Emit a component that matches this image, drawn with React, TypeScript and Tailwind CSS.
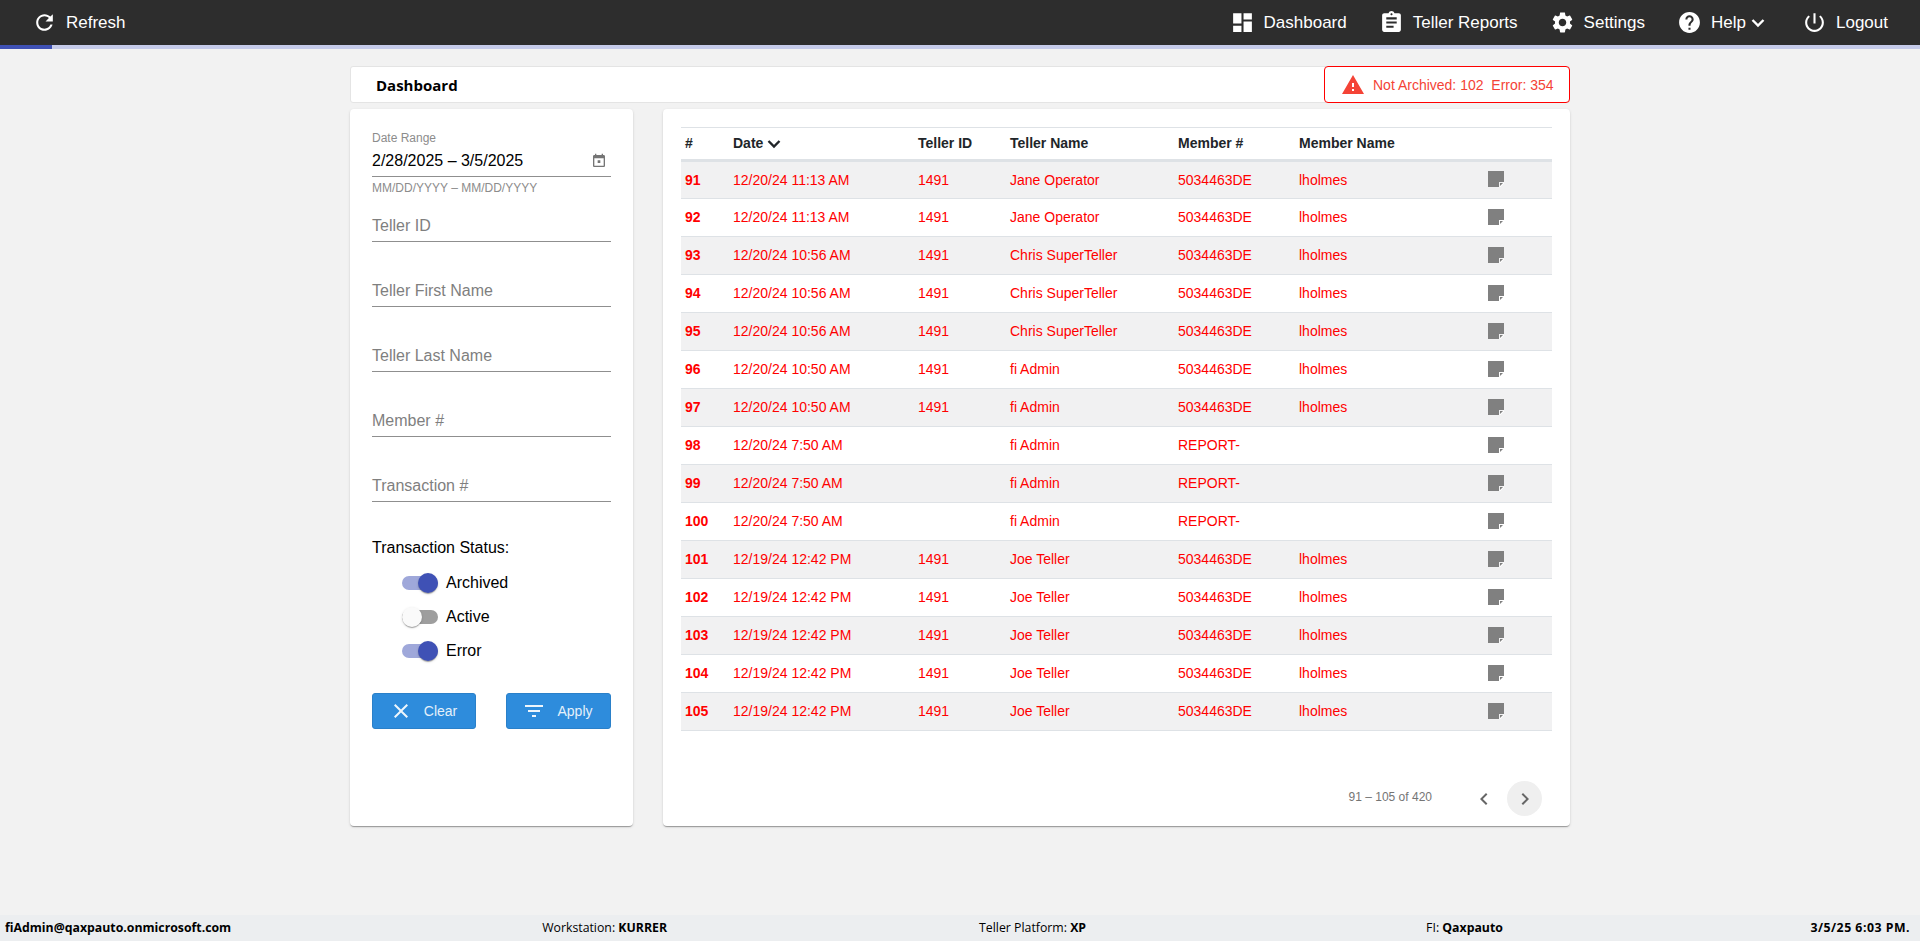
import React from "react";

type Row = { id: number; date: string; tellerId: string; teller: string; member: string; memberName: string };

const makeRow = (id: number, date: string, teller: string, tellerId = "1491", member = "5034463DE", memberName = "lholmes"): Row => ({
  id,
  date,
  tellerId,
  teller,
  member,
  memberName,
});

const ROWS: Row[] = [
  makeRow(91, "12/20/24 11:13 AM", "Jane Operator"),
  makeRow(92, "12/20/24 11:13 AM", "Jane Operator"),
  makeRow(93, "12/20/24 10:56 AM", "Chris SuperTeller"),
  makeRow(94, "12/20/24 10:56 AM", "Chris SuperTeller"),
  makeRow(95, "12/20/24 10:56 AM", "Chris SuperTeller"),
  makeRow(96, "12/20/24 10:50 AM", "fi Admin"),
  makeRow(97, "12/20/24 10:50 AM", "fi Admin"),
  makeRow(98, "12/20/24 7:50 AM", "fi Admin", "", "REPORT-", ""),
  makeRow(99, "12/20/24 7:50 AM", "fi Admin", "", "REPORT-", ""),
  makeRow(100, "12/20/24 7:50 AM", "fi Admin", "", "REPORT-", ""),
  makeRow(101, "12/19/24 12:42 PM", "Joe Teller"),
  makeRow(102, "12/19/24 12:42 PM", "Joe Teller"),
  makeRow(103, "12/19/24 12:42 PM", "Joe Teller"),
  makeRow(104, "12/19/24 12:42 PM", "Joe Teller"),
  makeRow(105, "12/19/24 12:42 PM", "Joe Teller"),
];

const PATHS = {
  refresh:
    "M17.65 6.35C16.2 4.9 14.21 4 12 4c-4.42 0-7.99 3.58-7.99 8s3.57 8 7.99 8c3.73 0 6.84-2.55 7.73-6h-2.08c-.82 2.33-3.04 4-5.65 4-3.31 0-6-2.69-6-6s2.69-6 6-6c1.66 0 3.14.69 4.22 1.78L13 11h7V4l-2.35 2.35z",
  dashboard: "M3 13h8V3H3v10zm0 8h8v-6H3v6zm10 0h8V11h-8v10zm0-18v6h8V3h-8z",
  assignment:
    "M19 3h-4.18C14.4 1.84 13.3 1 12 1c-1.3 0-2.4.84-2.82 2H5c-1.1 0-2 .9-2 2v14c0 1.1.9 2 2 2h14c1.1 0 2-.9 2-2V5c0-1.1-.9-2-2-2zm-7 0c.55 0 1 .45 1 1s-.45 1-1 1-1-.45-1-1 .45-1 1-1zm2 14H7v-2h7v2zm3-4H7v-2h10v2zm0-4H7V7h10v2z",
  settings:
    "M19.14 12.94c.04-.3.06-.61.06-.94 0-.32-.02-.64-.07-.94l2.03-1.58c.18-.14.23-.41.12-.61l-1.92-3.32c-.12-.22-.37-.29-.59-.22l-2.39.96c-.5-.38-1.03-.7-1.62-.94l-.36-2.54c-.04-.24-.24-.41-.48-.41h-3.84c-.24 0-.43.17-.47.41l-.36 2.54c-.59.24-1.13.57-1.62.94l-2.39-.96c-.22-.08-.47 0-.59.22L2.74 8.87c-.12.21-.08.47.12.61l2.03 1.58c-.05.3-.09.63-.09.94s.02.64.07.94l-2.03 1.58c-.18.14-.23.41-.12.61l1.92 3.32c.12.22.37.29.59.22l2.39-.96c.5.38 1.03.7 1.62.94l.36 2.54c.05.24.24.41.48.41h3.84c.24 0 .44-.17.47-.41l.36-2.54c.59-.24 1.13-.56 1.62-.94l2.39.96c.22.08.47 0 .59-.22l1.92-3.32c.12-.22.07-.47-.12-.61l-2.01-1.58zM12 15.6c-1.98 0-3.6-1.62-3.6-3.6s1.62-3.6 3.6-3.6 3.6 1.62 3.6 3.6-1.62 3.6-3.6 3.6z",
  help: "M12 2C6.48 2 2 6.48 2 12s4.48 10 10 10 10-4.48 10-10S17.52 2 12 2zm1 17h-2v-2h2v2zm2.07-7.75l-.9.92C13.45 12.9 13 13.5 13 15h-2v-.5c0-1.1.45-2.1 1.17-2.83l1.24-1.26c.37-.36.59-.86.59-1.41 0-1.1-.9-2-2-2s-2 .9-2 2H8c0-2.21 1.79-4 4-4s4 1.79 4 4c0 .88-.36 1.68-.93 2.25z",
  power:
    "M13 3h-2v10h2V3zm4.83 2.17l-1.42 1.42C17.99 7.86 19 9.81 19 12c0 3.87-3.13 7-7 7s-7-3.13-7-7c0-2.19 1.01-4.14 2.58-5.42L6.17 5.17C4.23 6.82 3 9.26 3 12c0 4.97 4.03 9 9 9s9-4.03 9-9c0-2.74-1.23-5.18-3.17-6.83z",
  warning: "M1 21h22L12 2 1 21zm12-3h-2v-2h2v2zm0-4h-2v-4h2v4z",
  today: "M19 3h-1V1h-2v2H8V1H6v2H5c-1.11 0-2 .9-2 2v14c0 1.1.89 2 2 2h14c1.1 0 2-.9 2-2V5c0-1.1-.9-2-2-2zm0 16H5V8h14v11zM10 11h4v4h-4z",
  close: "M19 6.41L17.59 5 12 10.59 6.41 5 5 6.41 10.59 12 5 17.59 6.41 19 12 13.41 17.59 19 19 17.59 13.41 12z",
  filter: "M10 18h4v-2h-4v2zM3 6v2h18V6H3zm3 7h12v-2H6v2z",
  prev: "M15.41 7.41L14 6l-6 6 6 6 1.41-1.41L10.83 12z",
  next: "M10 6L8.59 7.41 13.17 12l-4.58 4.59L10 18l6-6z",
};

const Icon = ({ d, className }: { d: string; className: string }) => (
  <svg viewBox="0 0 24 24" className={className} fill="currentColor">
    <path d={d} />
  </svg>
);

const Chevron = ({ className }: { className: string }) => (
  <svg viewBox="0 0 14 10" className={className} fill="none" stroke="currentColor" strokeWidth="2.4">
    <path d="M1.5 2l5.5 5.5L12.5 2" />
  </svg>
);

const NoteIcon = () => (
  <svg viewBox="0 0 16 16" className="w-4 h-4 block">
    <path d="M0 0H16V11H11V16H0z" fill="#808080" />
    <path d="M16 11L11 16V16H12.5L16 12.5z" fill="#ffffff" />
    <path d="M12 12H15L12 15z" fill="#808080" />
  </svg>
);

const NavItem = ({ icon, label, chevron, className }: { icon: string; label: string; chevron?: boolean; className?: string }) => (
  <div className={`flex items-center ${className ?? ""}`}>
    <Icon d={icon} className="w-[25px] h-[25px] text-white" />
    <span className="ml-[9px] text-[17px] text-white">{label}</span>
    {chevron && <Chevron className="w-[14px] h-[10px] text-white ml-[5px] mt-[1px]" />}
  </div>
);

const TextField = ({ label }: { label: string }) => (
  <div className="h-[46px] mb-[19px] flex items-end border-b border-[#8f8f8f] pb-[3px] text-[16px] leading-6 text-[#7f7f7f]">
    {label}
  </div>
);

const Toggle = ({ label, on }: { label: string; on: boolean }) => (
  <div className="h-[34px] flex items-center">
    <div className={`relative w-9 h-[14px] rounded-full ${on ? "bg-[#9fa8da]" : "bg-[#9e9e9e]"}`}>
      <div
        className={`absolute top-[-3px] w-5 h-5 rounded-full shadow-[0_2px_1px_-1px_rgba(0,0,0,.2),0_1px_1px_0_rgba(0,0,0,.14),0_1px_3px_0_rgba(0,0,0,.12)] ${
          on ? "right-0 bg-[#3f51b5]" : "left-0 bg-[#fafafa]"
        }`}
      />
    </div>
    <span className="ml-2 text-[16px] text-black">{label}</span>
  </div>
);

const ActionButton = ({ icon, label, width }: { icon: string; label: string; width: string }) => (
  <button className={`${width} h-9 flex items-center justify-center rounded-[3px] bg-[#2e8cdc] border border-[#2a80c9] text-[14px] text-[#e4f0fa]`}>
    <Icon d={icon} className="w-6 h-6 text-[#eef6fc]" />
    <span className="ml-[11px] mr-[2px]">{label}</span>
  </button>
);

const FooterLabel = ({ label, value, className }: { label: string; value: string; className?: string }) => (
  <span className={className}>
    {label} <b>{value}</b>
  </span>
);

export default function App() {
  return (
    <div className="h-screen flex flex-col bg-[#f2f2f2] font-['Liberation_Sans',Arial,sans-serif] overflow-hidden">
      {/* Top bar */}
      <header className="h-[45px] shrink-0 bg-[#2d2d2d] flex items-center justify-between pl-[32px] pr-[32px]">
        <NavItem icon={PATHS.refresh} label="Refresh" />
        <nav className="flex items-center gap-[32px]">
          <NavItem icon={PATHS.dashboard} label="Dashboard" />
          <NavItem icon={PATHS.assignment} label="Teller Reports" />
          <NavItem icon={PATHS.settings} label="Settings" />
          <NavItem icon={PATHS.help} label="Help" chevron />
          <NavItem icon={PATHS.power} label="Logout" className="ml-[5px]" />
        </nav>
      </header>
      <div className="h-1 shrink-0 bg-[#c5cae9]">
        <div className="h-full w-[52px] bg-[#3f51b5]" />
      </div>

      <main className="flex-1 w-[1220px] ml-[350px] pt-[17px]">
        {/* Title bar */}
        <div className="h-[37px] flex items-center justify-between bg-white border border-[#e4e4e4] rounded-[3px] pl-[25px]">
          <h1 className="pt-[2px] text-[15px] font-bold text-black font-['Open_Sans',sans-serif]">Dashboard</h1>
          <div className="w-[246px] h-[37px] -mr-px flex items-center pl-[16px] bg-white border-[1.5px] border-[#ff0000] rounded-[4px] text-[14px] text-[#f44336] whitespace-pre">
            <Icon d={PATHS.warning} className="w-6 h-6 text-[#f44336] shrink-0" />
            <span className="ml-[8px] mt-px">Not Archived: 102  Error: 354</span>
          </div>
        </div>

        <div className="mt-[6px] flex gap-[30px] h-[717px]">
          {/* Filters */}
          <aside className="w-[283px] bg-white rounded-[4px] px-[22px] pt-[22px] shadow-[0_2px_1px_-1px_rgba(0,0,0,.2),0_1px_1px_0_rgba(0,0,0,.14),0_1px_3px_0_rgba(0,0,0,.12)]">
            <div className="text-[12px] leading-[14px] text-[#8c8c8c]">Date Range</div>
            <div className="h-[32px] flex items-center justify-between border-b border-[#8f8f8f] text-[16px] text-black">
              <span>2/28/2025 – 3/5/2025</span>
              <Icon d={PATHS.today} className="w-4 h-4 text-[#757575] mr-[4px]" />
            </div>
            <div className="h-[19px] pt-[2px] text-[12px] leading-[18px] text-[#8c8c8c]">MM/DD/YYYY – MM/DD/YYYY</div>

            <TextField label="Teller ID" />
            <TextField label="Teller First Name" />
            <TextField label="Teller Last Name" />
            <TextField label="Member #" />
            <TextField label="Transaction #" />

            <div className="mt-[35px] text-[16px] leading-[22px] text-black">Transaction Status:</div>
            <div className="mt-[7px] pl-[30px]">
              <Toggle label="Archived" on />
              <Toggle label="Active" on={false} />
              <Toggle label="Error" on />
            </div>

            <div className="mt-[25px] flex justify-between">
              <ActionButton icon={PATHS.close} label="Clear" width="w-[104px]" />
              <ActionButton icon={PATHS.filter} label="Apply" width="w-[105px]" />
            </div>
          </aside>

          {/* Transactions */}
          <section className="w-[907px] flex flex-col bg-white rounded-[4px] pt-[18px] pl-[18px] pr-[18px] shadow-[0_2px_1px_-1px_rgba(0,0,0,.2),0_1px_1px_0_rgba(0,0,0,.14),0_1px_3px_0_rgba(0,0,0,.12)]">
            <table className="w-[871px] table-fixed border-collapse">
              <colgroup>
                <col className="w-[48px]" />
                <col className="w-[185px]" />
                <col className="w-[92px]" />
                <col className="w-[168px]" />
                <col className="w-[121px]" />
                <col className="w-[187px]" />
                <col />
              </colgroup>
              <thead>
                <tr className="h-[33px] border-t-[1.5px] border-[#dee2e6] border-b-[3px] text-left text-[14px] font-bold text-[#212529]">
                  <th className="pl-1">#</th>
                  <th className="pl-1">
                    <span className="flex items-center">
                      Date
                      <Chevron className="w-[14px] h-[10px] ml-[4px] mt-[1px]" />
                    </span>
                  </th>
                  <th className="pl-1">Teller ID</th>
                  <th className="pl-1">Teller Name</th>
                  <th className="pl-1">Member #</th>
                  <th className="pl-1">Member Name</th>
                  <th />
                </tr>
              </thead>
              <tbody>
                {ROWS.map((row, index) => (
                  <tr key={row.id} className={`h-[38px] border-b border-[#dee2e6] text-[14px] text-[#ff0000] ${index % 2 === 0 ? "bg-[#f1f1f2]" : "bg-white"}`}>
                    <td className="pl-1 font-bold">{row.id}</td>
                    <td className="pl-1">{row.date}</td>
                    <td className="pl-1">{row.tellerId}</td>
                    <td className="pl-1">{row.teller}</td>
                    <td className="pl-1">{row.member}</td>
                    <td className="pl-1">{row.memberName}</td>
                    <td className="pl-[6px]">
                      <span className="flex items-center -mt-[2px]">
                        <NoteIcon />
                      </span>
                    </td>
                  </tr>
                ))}
              </tbody>
            </table>

            <div className="mt-auto mb-[10px] mr-[10px] flex items-center justify-end text-[12px] text-[#757575]">
              <span className="mr-[34px] -mt-[3px]">91 – 105 of 420</span>
              <button className="w-[35px] h-[35px] flex items-center justify-center text-[#666666]">
                <Icon d={PATHS.prev} className="w-6 h-6" />
              </button>
              <button className="ml-[6px] w-[35px] h-[35px] flex items-center justify-center rounded-full bg-[#efefef] text-[#666666]">
                <Icon d={PATHS.next} className="w-6 h-6" />
              </button>
            </div>
          </section>
        </div>
      </main>

      {/* Status bar */}
      <footer className="h-[26px] shrink-0 bg-[#eceef0] flex items-center pl-[5px] pr-[10px] pt-px text-[12.3px] text-black font-['Open_Sans',sans-serif]">
        <b>fiAdmin@qaxpauto.onmicrosoft.com</b>
        <FooterLabel label="Workstation:" value="KURRER" className="ml-[311px]" />
        <FooterLabel label="Teller Platform:" value="XP" className="ml-[312px]" />
        <FooterLabel label="FI:" value="Qaxpauto" className="ml-[340px]" />
        <b className="ml-auto tracking-[0.5px]">3/5/25 6:03 PM.</b>
      </footer>
    </div>
  );
}
